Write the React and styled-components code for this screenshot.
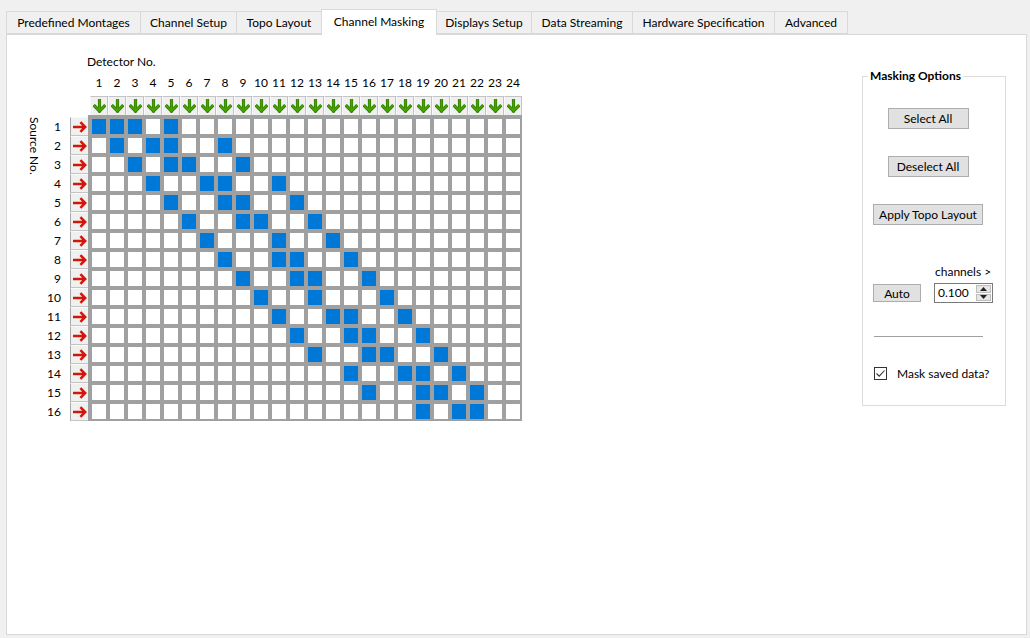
import React from 'react';
import styled, { createGlobalStyle } from 'styled-components';

const GlobalStyle = createGlobalStyle`
  html, body {
    margin: 0;
    padding: 0;
    background: #f0f0f0;
  }
  body {
    font-family: Lato, "Noto Sans", "Liberation Sans", sans-serif;
    font-size: 12px;
    color: #000;
  }
`;

const tabs = [
  { label: 'Predefined Montages', w: 135 },
  { label: 'Channel Setup', w: 97 },
  { label: 'Topo Layout', w: 86 },
  { label: 'Channel Masking', w: 116, active: true },
  { label: 'Displays Setup', w: 96 },
  { label: 'Data Streaming', w: 102 },
  { label: 'Hardware Specification', w: 143 },
  { label: 'Advanced', w: 74 },
];

// detectors switched on for each source row
const masks = [
  [1, 2, 3, 5],
  [2, 4, 5, 8],
  [3, 5, 6, 9],
  [4, 7, 8, 11],
  [5, 8, 9, 12],
  [6, 9, 10, 13],
  [7, 11, 14],
  [8, 11, 12, 15],
  [9, 12, 13, 16],
  [10, 13, 17],
  [11, 14, 15, 18],
  [12, 15, 16, 19],
  [13, 16, 17, 20],
  [15, 18, 19, 21],
  [16, 19, 20, 22],
  [19, 21, 22],
];

const detectors = Array.from({ length: 24 }, (_, i) => i + 1);

function DownArrow() {
  return (
    <svg width="13" height="14" viewBox="0 0 13 14">
      <path d="M6.5 1 V12 M1.8 7.2 L6.5 12 L11.2 7.2" fill="none" stroke="#2c7300" strokeWidth="3.2" strokeLinecap="square" />
      <path d="M6.5 1 V11.6 M1.8 7.2 L6.5 11.8 L11.2 7.2" fill="none" stroke="#46a300" strokeWidth="2" strokeLinecap="square" />
    </svg>
  );
}

function RightArrow() {
  return (
    <svg width="15" height="12" viewBox="0 0 15 12">
      <path d="M1 6 H13 M8.4 1.2 L13.2 6 L8.4 10.8" fill="none" stroke="#d3160a" strokeWidth="2.5" />
    </svg>
  );
}

export default function App() {
  return (
    <>
      <GlobalStyle />
      <Window>
        <TabBar>
          {tabs.map((t) => (
            <Tab key={t.label} $w={t.w} $active={t.active}>
              {t.label}
            </Tab>
          ))}
        </TabBar>

        <Pane>
          <MatrixArea>
            <DetectorTitle>Detector No.</DetectorTitle>
            <ColNumbers>
              {detectors.map((d) => (
                <ColNumber key={d}>{d}</ColNumber>
              ))}
            </ColNumbers>

            <MatrixBody>
              <SourceLabel>Source No.</SourceLabel>
              <RowNumbers>
                {masks.map((_, i) => (
                  <RowNumber key={i}>{i + 1}</RowNumber>
                ))}
              </RowNumbers>

              <Table>
                <Corner />
                <ColHeads>
                  {detectors.map((d) => (
                    <HeadButton key={d}>
                      <DownArrow />
                    </HeadButton>
                  ))}
                </ColHeads>
                <RowHeads>
                  {masks.map((_, i) => (
                    <RowButton key={i}>
                      <RightArrow />
                    </RowButton>
                  ))}
                </RowHeads>
                <Cells>
                  {masks.map((row, r) =>
                    detectors.map((d) => <Cell key={`${r}-${d}`} $on={row.includes(d)} />)
                  )}
                </Cells>
              </Table>
            </MatrixBody>
          </MatrixArea>

          <GroupBox>
            <GroupTitle>Masking Options</GroupTitle>
            <GroupInner>
              <PushButton $w={81}>Select All</PushButton>
              <PushButton $w={81} $mt={27}>
                Deselect All
              </PushButton>
              <PushButton $w={110} $mt={27}>
                Apply Topo Layout
              </PushButton>

              <AutoRow>
                <ChannelsLabel>channels &gt;</ChannelsLabel>
                <PushButton $w={48} $h={18}>
                  Auto
                </PushButton>
                <SpinBox>
                  <SpinText>0.100</SpinText>
                  <SpinButtons>
                    <SpinButton>
                      <svg width="7" height="4" viewBox="0 0 7 4">
                        <path d="M0 4 L3.5 0 L7 4 Z" fill="#222" />
                      </svg>
                    </SpinButton>
                    <SpinButton>
                      <svg width="7" height="4" viewBox="0 0 7 4">
                        <path d="M0 0 L3.5 4 L7 0 Z" fill="#222" />
                      </svg>
                    </SpinButton>
                  </SpinButtons>
                </SpinBox>
              </AutoRow>

              <Separator />

              <CheckRow>
                <CheckBox>
                  <svg width="11" height="11" viewBox="0 0 11 11">
                    <path d="M1.5 5.5 L4.2 8.2 L9.5 2.5" fill="none" stroke="#333" strokeWidth="1.1" />
                  </svg>
                </CheckBox>
                <span>Mask saved data?</span>
              </CheckRow>
            </GroupInner>
          </GroupBox>
        </Pane>
      </Window>
    </>
  );
}

const Window = styled.div`
  width: 1030px;
  height: 638px;
  display: flex;
  flex-direction: column;
  overflow: hidden;
`;

const TabBar = styled.div`
  display: flex;
  align-items: flex-end;
  height: 34px;
  padding-left: 6px;
  position: relative;
  z-index: 1;
`;

const Tab = styled.div`
  box-sizing: border-box;
  width: ${({ $w }) => $w}px;
  height: ${({ $active }) => ($active ? 26 : 23)}px;
  margin-bottom: ${({ $active }) => ($active ? -1 : 0)}px;
  margin-right: -1px;
  display: flex;
  align-items: center;
  justify-content: center;
  padding-bottom: ${({ $active }) => ($active ? 3 : 0)}px;
  border: 1px solid #d9d9d9;
  border-bottom: ${({ $active }) => ($active ? 'none' : '1px solid #d9d9d9')};
  background: ${({ $active }) => ($active ? '#fff' : '#f0f0f0')};
  position: relative;
  z-index: ${({ $active }) => ($active ? 2 : 1)};
  white-space: nowrap;
`;

const Pane = styled.div`
  box-sizing: border-box;
  width: 1021px;
  height: 601px;
  margin-left: 6px;
  background: #fff;
  border: 1px solid #d9d9d9;
  display: flex;
  align-items: flex-start;
  padding: 19px 20px 0 20px;
`;

const MatrixArea = styled.div`
  display: flex;
  flex-direction: column;
`;

const DetectorTitle = styled.div`
  margin-left: 60px;
  height: 16px;
  line-height: 16px;
  margin-bottom: 5px;
`;

const ColNumbers = styled.div`
  display: flex;
  margin-left: 63px;
  height: 16px;
  margin-bottom: 5px;
`;

const ColNumber = styled.div`
  width: 18px;
  text-align: center;
  line-height: 16px;
`;

const MatrixBody = styled.div`
  display: flex;
  align-items: flex-start;
`;

const SourceLabel = styled.div`
  writing-mode: vertical-rl;
  width: 15px;
  margin-top: 21px;
  line-height: 15px;
`;

const RowNumbers = styled.div`
  width: 20px;
  margin-top: 21px;
  margin-right: 8px;
  display: flex;
  flex-direction: column;
`;

const RowNumber = styled.div`
  height: 19px;
  line-height: 19px;
  text-align: right;
  padding-right: 1px;
`;

const Table = styled.div`
  display: grid;
  grid-template-columns: 18px 434px;
  grid-template-rows: 19px 306px;
`;

const Corner = styled.div``;

const ColHeads = styled.div`
  display: flex;
  padding-left: 2px;
`;

const HeadButton = styled.div`
  box-sizing: border-box;
  width: 18px;
  height: 19px;
  background: #f0f0f0;
  border-top: 1px solid #c4c4c4;
  border-right: 1px solid #c4c4c4;
  border-left: 1px solid #fafafa;
  display: flex;
  align-items: center;
  justify-content: center;
`;

const RowHeads = styled.div`
  display: flex;
  flex-direction: column;
  padding-top: 2px;
`;

const RowButton = styled.div`
  box-sizing: border-box;
  width: 18px;
  height: 19px;
  background: #f0f0f0;
  border-left: 1px solid #a8a8a8;
  border-bottom: 1px solid #c4c4c4;
  border-top: 1px solid #fafafa;
  display: flex;
  align-items: center;
  justify-content: center;
`;

const Cells = styled.div`
  background: #a0a0a0;
  padding: 4px 2px 2px 4px;
  display: grid;
  grid-template-columns: repeat(24, 14px);
  grid-auto-rows: 15px;
  gap: 4px;
`;

const Cell = styled.div`
  background: ${({ $on }) => ($on ? '#0078d7' : '#fff')};
`;

const GroupBox = styled.div`
  box-sizing: border-box;
  margin-left: auto;
  margin-top: 22px;
  width: 144px;
  height: 330px;
  border: 1px solid #dcdcdc;
  position: relative;
  padding: 31px 0 0 10px;
`;

const GroupTitle = styled.div`
  position: absolute;
  top: -9px;
  left: 5px;
  padding: 0 2px;
  background: #fff;
  font-weight: bold;
  line-height: 16px;
`;

const GroupInner = styled.div`
  width: 110px;
  display: flex;
  flex-direction: column;
  align-items: center;
`;

const PushButton = styled.div`
  box-sizing: border-box;
  width: ${({ $w }) => $w}px;
  height: ${({ $h }) => $h || 21}px;
  margin-top: ${({ $mt }) => $mt || 0}px;
  background: #e1e1e1;
  border: 1px solid #adadad;
  display: flex;
  align-items: center;
  justify-content: center;
  white-space: nowrap;
`;

const AutoRow = styled.div`
  align-self: flex-start;
  margin-top: 39px;
  display: grid;
  grid-template-columns: 48px 59px;
  column-gap: 13px;
  row-gap: 3px;
  align-items: center;

  & > ${PushButton} {
    grid-column: 1;
    grid-row: 2;
  }
`;

const ChannelsLabel = styled.div`
  grid-column: 2;
  grid-row: 1;
  line-height: 16px;
  padding-left: 1px;
  white-space: nowrap;
`;

const SpinBox = styled.div`
  grid-column: 2;
  grid-row: 2;
  box-sizing: border-box;
  height: 20px;
  border: 1px solid #7a7a7a;
  display: flex;
  align-items: stretch;
  background: #fff;
`;

const SpinText = styled.div`
  flex: 1;
  padding-left: 3px;
  line-height: 18px;
`;

const SpinButtons = styled.div`
  width: 15px;
  display: flex;
  flex-direction: column;
  padding: 1px 1px 1px 0;
  gap: 1px;
`;

const SpinButton = styled.div`
  flex: 1;
  background: #e6e6e6;
  border: 1px solid #bcbcbc;
  display: flex;
  align-items: center;
  justify-content: center;
`;

const Separator = styled.div`
  align-self: flex-start;
  margin-top: 33px;
  margin-left: 1px;
  width: 109px;
  height: 1px;
  background: #a0a0a0;
`;

const CheckRow = styled.div`
  align-self: flex-start;
  margin-top: 29px;
  margin-left: 1px;
  display: flex;
  align-items: center;
  gap: 10px;
  white-space: nowrap;
`;

const CheckBox = styled.div`
  box-sizing: border-box;
  width: 13px;
  height: 13px;
  border: 1px solid #333;
  background: #fff;
  display: flex;
  align-items: center;
  justify-content: center;
`;
